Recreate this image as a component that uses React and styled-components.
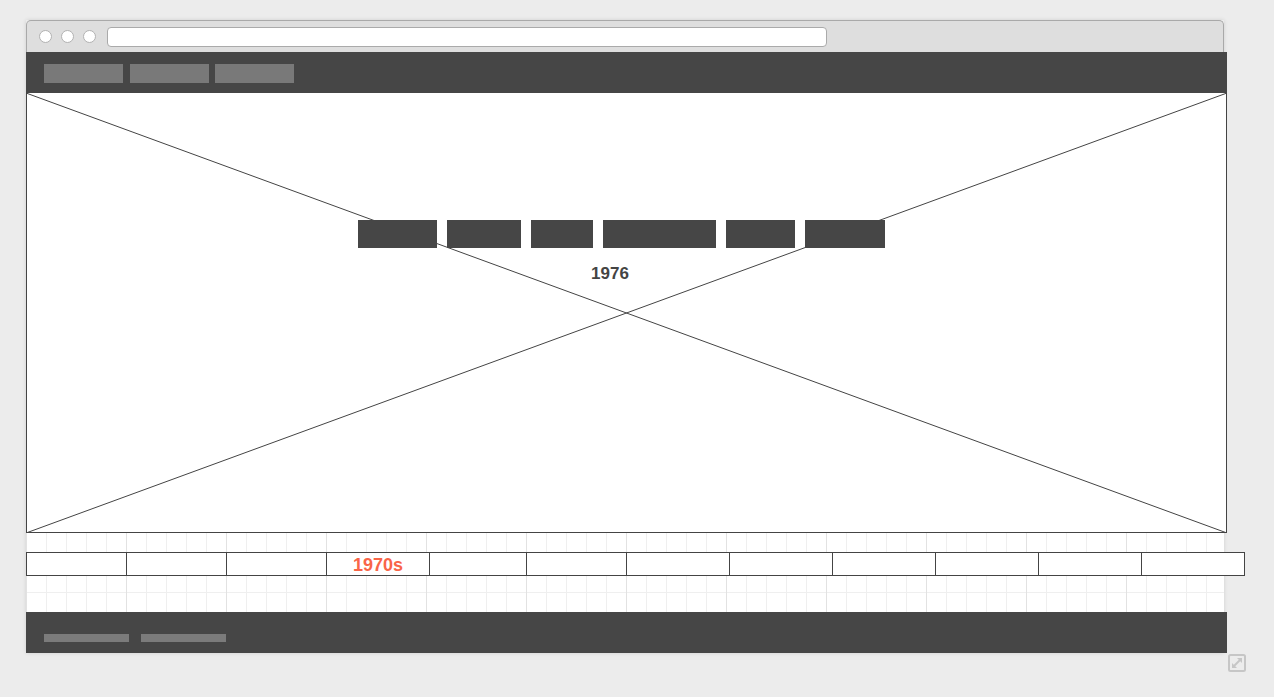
import React from "react";
import styled, { createGlobalStyle } from "styled-components";

const Global = createGlobalStyle`
  html, body { margin: 0; padding: 0; background: #ececec; }
  body { font-family: "Liberation Sans", Arial, Helvetica, sans-serif; }
`;

const Page = styled.div`
  padding: 20px 0 0 26px;
  display: flex;
  flex-direction: column;
  align-items: flex-start;
`;

const Window = styled.div`
  width: 1198px;
  display: flex;
  flex-direction: column;
  box-shadow: 0 0 4px rgba(0, 0, 0, 0.12);
`;

const TitleBar = styled.div`
  box-sizing: border-box;
  height: 32px;
  width: 1198px;
  background: #dedede;
  border: 1px solid #a9a9a9;
  border-bottom: none;
  border-radius: 5px 5px 0 0;
  display: flex;
  align-items: center;
  padding-left: 12px;
  gap: 9px;
`;

const Dot = styled.span`
  box-sizing: border-box;
  width: 13px;
  height: 13px;
  border-radius: 50%;
  background: #fff;
  border: 1px solid #b2b2b2;
`;

const Url = styled.div`
  box-sizing: border-box;
  margin-left: 2px;
  width: 720px;
  height: 20px;
  background: #fff;
  border: 1px solid #aaa;
  border-radius: 4px;
`;

const DarkBar = styled.div`
  box-sizing: border-box;
  width: 1201px;
  height: 41px;
  background: #464646;
  display: flex;
  align-items: flex-start;
  padding-left: 18px;
  padding-top: ${(p) => p.$top}px;
  gap: ${(p) => p.$gap}px;
`;

const NavItem = styled.span`
  width: 79px;
  height: 19px;
  background: #797979;
  margin-right: ${(p) => p.$extra || 0}px;
`;

const FootItem = styled.span`
  width: 85px;
  height: 8px;
  background: #7b7b7b;
`;

const Hero = styled.div`
  box-sizing: border-box;
  position: relative;
  width: 1201px;
  height: 440px;
  background: #fff;
  border: 1px solid #444;
  border-top: none;
  display: flex;
  flex-direction: column;
  align-items: center;
  padding-top: 127px;
  padding-right: 10px;
`;

const Cross = styled.svg`
  position: absolute;
  left: -1px;
  top: 0;
  width: calc(100% + 2px);
  height: calc(100% + 1px);
  pointer-events: none;
`;

const ButtonRow = styled.div`
  position: relative;
  display: flex;
  gap: 10px;
`;

const HeroButton = styled.span`
  width: ${(p) => p.$w}px;
  height: 28px;
  background: #464646;
`;

const Year = styled.div`
  position: relative;
  margin-top: 16px;
  margin-right: 23px;
  font-size: 17px;
  line-height: 20px;
  font-weight: bold;
  color: #444;
`;

const GridArea = styled.div`
  box-sizing: border-box;
  width: 1198px;
  height: 79px;
  padding-top: 19px;
  background-color: #fff;
  background-image:
    linear-gradient(to right, #e2e2e2 1px, transparent 1px),
    linear-gradient(to bottom, #e2e2e2 1px, transparent 1px),
    linear-gradient(to right, #efefef 1px, transparent 1px),
    linear-gradient(to bottom, #efefef 1px, transparent 1px);
  background-size: 100px 100px, 100px 100px, 20px 20px, 20px 20px;
  background-position: 0 -1px, 0 -1px, 0 -1px, 0 -1px;
`;

const Timeline = styled.div`
  box-sizing: border-box;
  width: 1219px;
  height: 24px;
  border: 1px solid #444;
  background: #fff;
  display: flex;
`;

const Era = styled.div`
  box-sizing: border-box;
  width: ${(p) => p.$w}px;
  flex: none;
  border-left: ${(p) => (p.$first ? "none" : "1px solid #444")};
  display: flex;
  align-items: center;
  justify-content: center;
  padding-top: 2px;
  font-size: 18px;
  font-weight: bold;
  color: #f96548;
`;

const Resize = styled.div`
  margin: 1px 0 0 1202px;
  width: 18px;
  height: 18px;
  display: flex;
`;

const heroButtons = [79, 74, 62, 113, 69, 80];
const eras = [
  { w: 99, label: "" },
  { w: 100, label: "" },
  { w: 100, label: "" },
  { w: 103, label: "1970s" },
  { w: 97, label: "" },
  { w: 100, label: "" },
  { w: 103, label: "" },
  { w: 103, label: "" },
  { w: 103, label: "" },
  { w: 103, label: "" },
  { w: 103, label: "" },
  { w: 103, label: "" },
];

export default function App() {
  return (
    <>
      <Global />
      <Page>
        <Window>
          <TitleBar>
            <Dot />
            <Dot />
            <Dot />
            <Url />
          </TitleBar>
          <DarkBar $top={12} $gap={6}>
            <NavItem $extra={1} />
            <NavItem />
            <NavItem />
          </DarkBar>
          <Hero>
            <Cross viewBox="0 0 100 100" preserveAspectRatio="none">
              <line x1="0" y1="0" x2="100" y2="100" stroke="#444" strokeWidth="1" vectorEffect="non-scaling-stroke" />
              <line x1="100" y1="0" x2="0" y2="100" stroke="#444" strokeWidth="1" vectorEffect="non-scaling-stroke" />
            </Cross>
            <ButtonRow>
              {heroButtons.map((w, i) => (
                <HeroButton key={i} $w={w} />
              ))}
            </ButtonRow>
            <Year>1976</Year>
          </Hero>
          <GridArea>
            <Timeline>
              {eras.map((e, i) => (
                <Era key={i} $w={e.w} $first={i === 0}>
                  {e.label}
                </Era>
              ))}
            </Timeline>
          </GridArea>
          <DarkBar $top={22} $gap={12}>
            <FootItem />
            <FootItem />
          </DarkBar>
        </Window>
        <Resize>
          <svg width="18" height="18" viewBox="0 0 18 18">
            <rect x="1" y="1" width="16" height="16" rx="1.5" fill="none" stroke="#c6c6c6" strokeWidth="2" />
            <line x1="5" y1="13" x2="13" y2="5" stroke="#c6c6c6" strokeWidth="2" />
            <polygon points="9,4 14,4 14,9" fill="#c6c6c6" />
            <polygon points="4,9 4,14 9,14" fill="#c6c6c6" />
          </svg>
        </Resize>
      </Page>
    </>
  );
}
